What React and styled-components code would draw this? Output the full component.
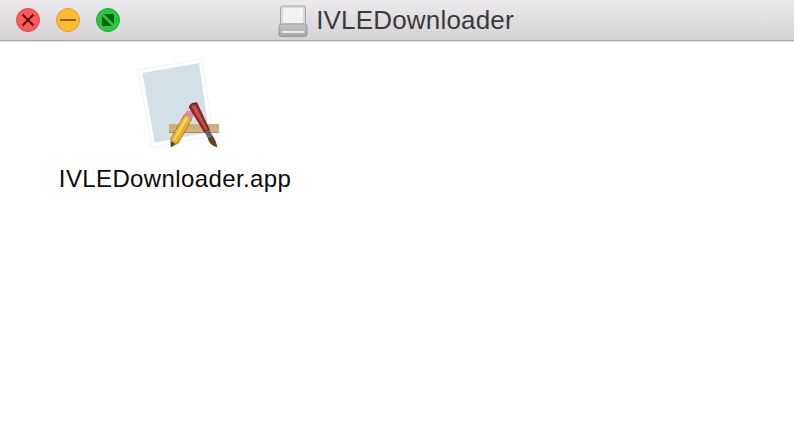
import React from "react";
import styled, { createGlobalStyle } from "styled-components";

const Global = createGlobalStyle`
  html, body { margin: 0; padding: 0; background: #fff; }
  body { font-family: "Liberation Sans", Arial, sans-serif; overflow: hidden; }
`;

const Window = styled.div`
  width: 794px;
  height: 438px;
  display: flex;
  flex-direction: column;
  background: #fff;
`;

const TitleBar = styled.header`
  height: 40px;
  box-sizing: content-box;
  display: grid;
  grid-template-columns: 1fr auto 1fr;
  align-items: center;
  background: linear-gradient(#ebe9eb, #d5d3d5);
  border-bottom: 1px solid #aaa9aa;
  box-shadow: 0 1px 0 #dcdcdc;
`;

const Lights = styled.div`
  display: flex;
  gap: 16px;
  padding-left: 16px;
`;

const Light = styled.div`
  width: 24px;
  height: 24px;
  box-sizing: border-box;
  border-radius: 50%;
  background: ${(p) => p.$bg};
  border: 1px solid ${(p) => p.$edge};
  display: flex;
  align-items: center;
  justify-content: center;
`;

const Title = styled.div`
  display: flex;
  align-items: center;
  gap: 8px;
  margin-left: -2px;
`;

const TitleText = styled.span`
  font-size: 26px;
  line-height: 40px;
  color: #3a3a3c;
  letter-spacing: 0.18px;
`;

const Content = styled.main`
  flex: 1;
  display: flex;
  align-items: flex-start;
  padding: 9px 0 0 59px;
`;

const FileItem = styled.div`
  display: flex;
  flex-direction: column;
  align-items: center;
  width: 232px;
`;

const FileIconBox = styled.div`
  margin-left: 5px;
  height: 114px;
`;

const FileLabel = styled.span`
  font-size: 24px;
  line-height: 30px;
  color: #0b0b0b;
  white-space: nowrap;
  letter-spacing: 0.38px;
`;

const DriveIcon = () => (
  <svg width="30" height="34" viewBox="0 0 30 34" style={{ display: "block" }}>
    <defs>
      <linearGradient id="drb" x1="0" y1="0" x2="0" y2="1">
        <stop offset="0" stopColor="#c4c4c4" />
        <stop offset="1" stopColor="#a8a8a8" />
      </linearGradient>
    </defs>
    <path d="M2.5 5Q2.5 3 4.5 3H25.5Q27.5 3 27.5 5V22H2.5Z" fill="#d8d8d8" stroke="#a8a8a8" strokeWidth="1" />
    <path d="M5 5H25V20H5Z" fill="#f2f2f2" />
    <path d="M1 24Q1 21 3.5 21H26.5Q29 21 29 24V31Q29 33.5 26.5 33.5H3.5Q1 33.5 1 31Z" fill="url(#drb)" stroke="#999" strokeWidth="1" />
    <path d="M4.5 29H25.5" stroke="#eaeaea" strokeWidth="1.8" strokeLinecap="round" />
  </svg>
);

const AppIcon = () => (
  <svg width="105" height="110" viewBox="0 0 105 110" style={{ display: "block" }}>
    <path d="M13 20L77 9L88 85L27 98Z" fill="#fff" stroke="#e6e9ea" strokeWidth="0.6" strokeLinejoin="round" />
    <path d="M17.5 23L74 13L84 82L29.5 92.5Z" fill="#d3e0e6" />
    <rect x="44" y="74" width="50" height="9" rx="1" fill="#d2ae80" />
    <path d="M44 76.5H94" stroke="#b88f5e" strokeWidth="1" strokeDasharray="1 2.4" />
    <path d="M44 82.5H94" stroke="#b08a5c" strokeWidth="1" />
    {/* pencil */}
    <path d="M59.2 64.9L66.8 69.1L53.3 93L46 97L45.7 88.9Z" fill="#e9ae2b" stroke="#8f6a14" strokeWidth="0.7" strokeLinejoin="round" />
    <path d="M61 66L63.8 67.5L49.8 91L47.8 89.8Z" fill="#f7d35a" />
    <path d="M46 97L46.1 91.3L50.4 93.8Z" fill="#4a3d2d" />
    <path d="M59.2 64.9L61.2 61.6Q64.5 59.6 67.4 61.6Q69 64 68.4 66.4L66.8 69.1Z" fill="#dc8aa0" />
    {/* brush */}
    <path d="M64.2 57.2Q65.5 52.6 71.8 52.8L84.4 79.8L79.6 82.2Z" fill="#962c27" stroke="#531a16" strokeWidth="0.8" strokeLinejoin="round" />
    <path d="M66.6 56.6L70 55L82.4 79.6L81 80.4Z" fill="#c9534a" />
    <path d="M79.6 82.2L84.4 79.8L87.4 85.2L82.6 87.8Z" fill="#5e6670" />
    <path d="M82.6 87.8L87.4 85.2Q91.5 91 92.5 97.5Q84 95.5 82.6 87.8Z" fill="#6d411e" />
  </svg>
);

export default function App() {
  return (
    <>
      <Global />
      <Window>
        <TitleBar>
          <Lights>
            <Light $bg="#fc5b57" $edge="#e2463f">
              <svg width="14" height="14" viewBox="0 0 14 14">
                <path d="M1.5 1.5L12.5 12.5M12.5 1.5L1.5 12.5" stroke="#6a0d0a" strokeWidth="2" />
              </svg>
            </Light>
            <Light $bg="#febb2e" $edge="#e19f2a">
              <svg width="16" height="4" viewBox="0 0 16 4">
                <path d="M0 2H16" stroke="#985a0f" strokeWidth="2" />
              </svg>
            </Light>
            <Light $bg="#29c73f" $edge="#1eab2b">
              <svg width="12" height="12" viewBox="0 0 12 12">
                <path d="M2 0H12V10Z M0 2L10 12H0Z" fill="#07610f" />
              </svg>
            </Light>
          </Lights>
          <Title>
            <DriveIcon />
            <TitleText>IVLEDownloader</TitleText>
          </Title>
        </TitleBar>
        <Content>
          <FileItem>
            <FileIconBox>
              <AppIcon />
            </FileIconBox>
            <FileLabel>IVLEDownloader.app</FileLabel>
          </FileItem>
        </Content>
      </Window>
    </>
  );
}
